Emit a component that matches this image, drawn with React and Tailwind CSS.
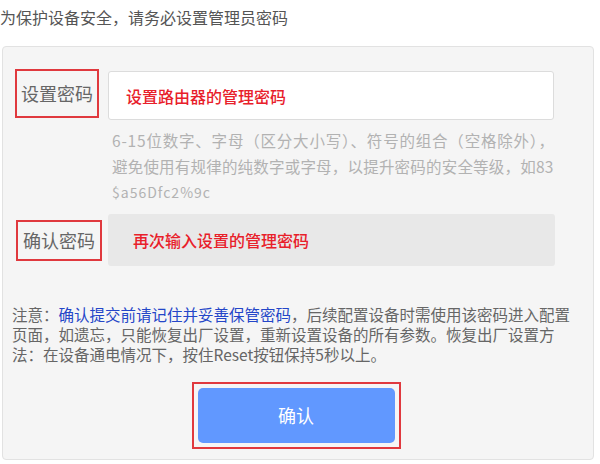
export default function App() {
  const font = { fontFamily: '"Noto Sans CJK SC", "Noto Sans", sans-serif' }

  return (
    <div className="w-[600px] h-[464px] bg-white overflow-hidden" style={font}>
      {/* Title */}
      <div className="h-[46px] pt-[5px] text-[16px] leading-[24px] text-[#555]">
        为保护设备安全，请务必设置管理员密码
      </div>

      {/* Panel */}
      <div className="ml-[2px] w-[592px] h-[414px] bg-[#f5f5f5] border border-[#e2e2e2] rounded-sm">
        {/* Password row */}
        <div className="flex items-start mt-[22px] ml-[12px]">
          <div className="w-[84px] h-[49px] border-2 border-[#e0393e] flex items-center justify-center text-[18px] text-[#666]">
            设置密码
          </div>
          <div className="ml-[9px] mt-[2px] w-[446px] h-[49px] bg-white border border-[#dcdcdc] rounded-[3px] flex items-center pl-[17px] text-[16px] font-medium text-[#e8202a]">
            设置路由器的管理密码
          </div>
        </div>

        {/* Hint */}
        <div className="ml-[109px] mt-[7px] text-[15.5px] leading-[26px] text-[#b2b2b2]">
          <div className="tracking-[0.8px]">6-15位数字、字母（区分大小写）、符号的组合（空格除外），</div>
          <div className="tracking-[0.2px]">避免使用有规律的纯数字或字母，以提升密码的安全等级，如83</div>
          <div className="text-[14px] tracking-[1px]">$a56Dfc2%9c</div>
        </div>

        {/* Confirm row */}
        <div className="flex items-center mt-[9px] ml-[13px]">
          <div className="w-[86px] h-[41px] border-2 border-[#e0393e] flex items-center justify-center text-[18px] text-[#666]">
            确认密码
          </div>
          <div className="ml-[6px] w-[447px] h-[52px] bg-[#e8e8e8] rounded-[3px] flex items-center pl-[25px] text-[16px] font-medium text-[#e8202a]">
            再次输入设置的管理密码
          </div>
        </div>

        {/* Note */}
        <div className="ml-[9px] mt-[38px] text-[15.5px] leading-[20px] text-[#666]">
          注意：<span className="text-[#2446c8]">确认提交前请记住并妥善保管密码</span>，后续配置设备时需使用该密码进入配置
          <br />
          页面，如遗忘，只能恢复出厂设置，重新设置设备的所有参数。恢复出厂设置方
          <br />
          法：在设备通电情况下，按住Reset按钮保持5秒以上。
        </div>

        {/* Submit */}
        <div className="flex justify-center mt-[18px] pr-[4px]">
          <div className="w-[209px] h-[67px] border-2 border-[#e0393e] p-[4px]">
            <button className="w-full h-full bg-[#6198ff] rounded-[5px] text-white text-[18px]">
              确认
            </button>
          </div>
        </div>
      </div>
    </div>
  )
}
